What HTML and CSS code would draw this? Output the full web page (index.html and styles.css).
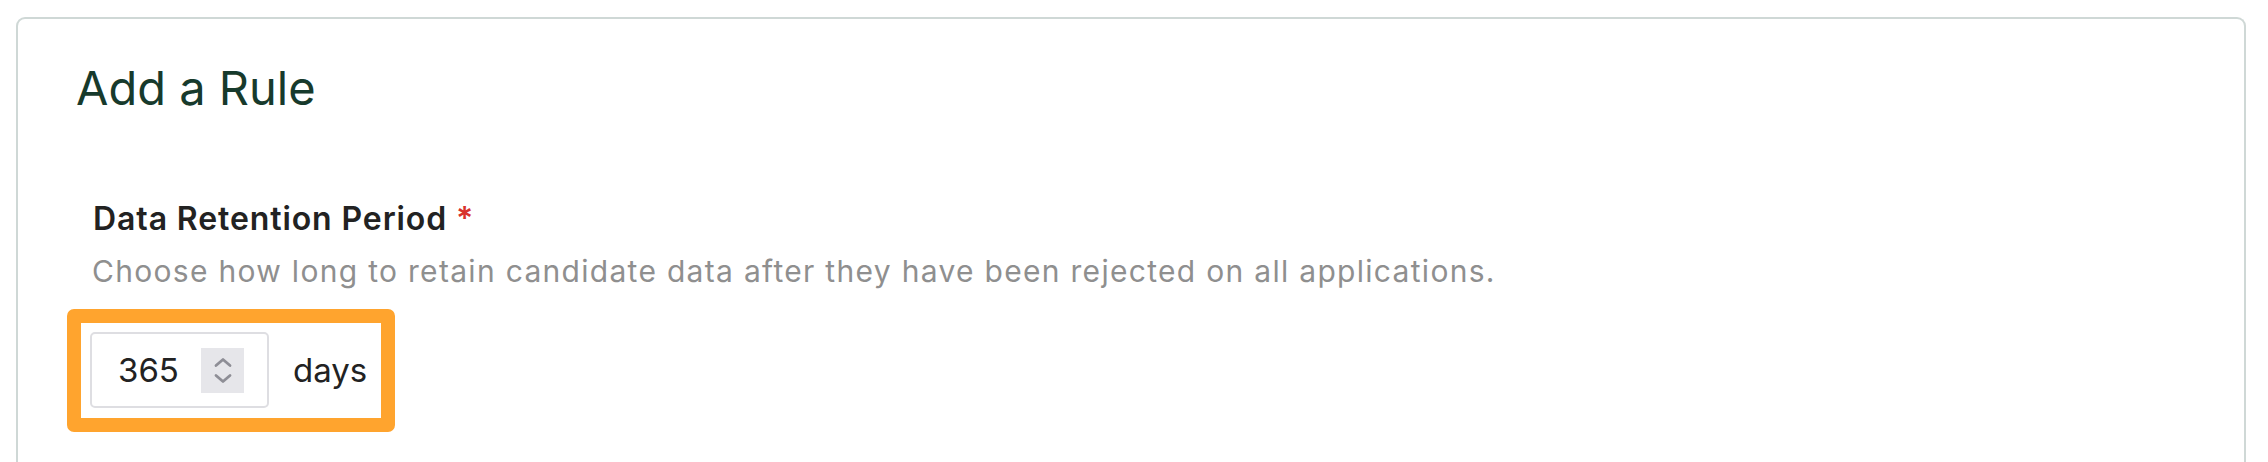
FILE: index.html
```html
<!DOCTYPE html>
<html>
<head>
<meta charset="utf-8">
<link rel="stylesheet" href="styles.css">
</head>
<body>
<div class="card">
  <h1 class="title">Add a Rule</h1>
  <div class="field">
    <div class="label">Data Retention Period <span class="req">*</span></div>
    <div class="desc">Choose how long to retain candidate data after they have been rejected on all applications.</div>
    <div class="highlight">
      <div class="input">
        <span class="value">365</span>
        <span class="spinner">
          <svg width="43" height="45" viewBox="0 0 43 45" fill="none" stroke="#8e8e96" stroke-width="2.8" stroke-linecap="round" stroke-linejoin="round">
            <polyline points="15,17.5 22,11.5 29,17.5"/>
            <polyline points="15,27.5 22,33.5 29,27.5"/>
          </svg>
        </span>
      </div>
      <span class="unit">days</span>
    </div>
  </div>
</div>
</body>
</html>
```

FILE: styles.css
```css
html, body {
  margin: 0;
  padding: 0;
  background: #ffffff;
}
body {
  font-family: Inter, "Noto Sans", sans-serif;
  width: 2268px;
  height: 462px;
  overflow: hidden;
}
.card {
  margin: 17px 22px 0 16px;
  height: 445px;
  border: 2px solid #cfd8d6;
  border-bottom: none;
  border-radius: 9px 9px 0 0;
  box-sizing: border-box;
  padding: 0 0 0 58px;
}
.title {
  margin: 0;
  padding-top: 39px;
  font-size: 47px;
  font-weight: 400;
  line-height: 60px;
  color: #173a2c;
  letter-spacing: 0;
}
.field {
  margin-left: -9px;
  padding-top: 81px;
  display: flex;
  flex-direction: column;
  align-items: flex-start;
}
.label {
  margin-left: 26px;
  font-size: 32px;
  font-weight: 600;
  line-height: 40px;
  letter-spacing: 0.9px;
  color: #222222;
}
.req {
  color: #d8322c;
}
.desc {
  margin-left: 25px;
  margin-top: 12px;
  font-size: 30px;
  line-height: 40px;
  letter-spacing: 1.3px;
  color: #8f8f8f;
}
.highlight {
  margin-top: 18px;
  border: 14px solid #ffa42e;
  border-radius: 7px;
  padding: 9px 14px 10px 9px;
  display: flex;
  align-items: center;
  gap: 24px;
}
.input {
  width: 179px;
  height: 76px;
  box-sizing: border-box;
  border: 2px solid #dedee2;
  border-radius: 5px;
  display: flex;
  align-items: center;
  padding-left: 26px;
  gap: 22px;
}
.value, .unit {
  font-size: 33px;
  color: #222222;
  line-height: 40px;
}
.spinner {
  width: 43px;
  height: 45px;
  background: #e6e6ea;
  display: flex;
}
```
